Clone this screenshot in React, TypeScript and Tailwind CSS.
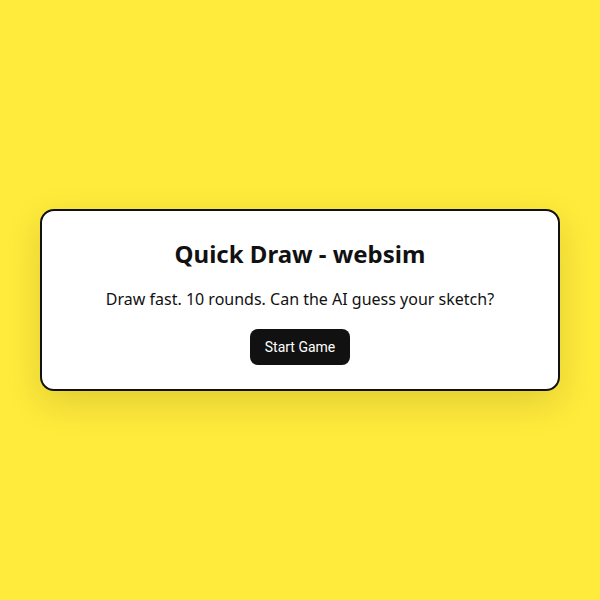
export default function App() {
  return (
    <div className="flex min-h-screen w-full items-center justify-center bg-[#ffeb3b] px-10">
      <div className="w-full rounded-[14px] border-2 border-[#111] bg-white px-6 pt-[25px] pb-6 text-center shadow-[0_12px_36px_rgba(0,0,0,0.13)]">
        <h1 className="text-[24px] font-bold leading-[36px] text-[#111] [font-family:'Noto_Sans',sans-serif]">
          Quick Draw - websim
        </h1>
        <p className="mt-[15px] text-[16px] leading-[24px] text-[#111] [font-family:'Noto_Sans',sans-serif]">
          Draw fast. 10 rounds. Can the AI guess your sketch?
        </p>
        <button className="mt-[18px] h-9 rounded-lg bg-[#111] px-[15px] text-[14px] text-white [font-family:Roboto,sans-serif]">
          Start Game
        </button>
      </div>
    </div>
  )
}
